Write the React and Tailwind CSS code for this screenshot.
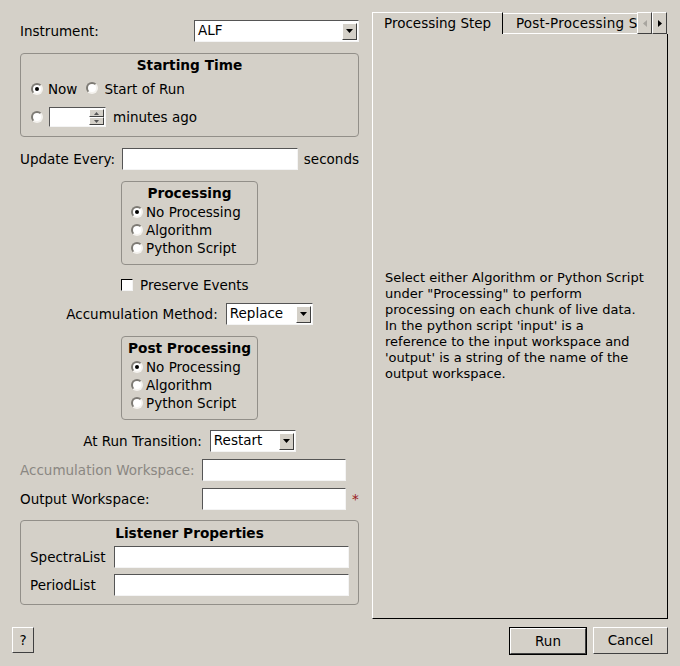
// Qt-style "Start Live Data" dialog, classic grey bevelled widgets.

const SUNKEN = 'border border-t-[#555] border-l-[#555] border-r-[#f4f4f4] border-b-[#f4f4f4]'
const RAISED = 'border border-t-white border-l-white border-r-[#404040] border-b-[#404040]'

function Radio({ checked = false }) {
  return (
    <span className="relative inline-flex h-[12px] w-[12px] shrink-0 items-center justify-center rounded-full border-2 border-t-[#7d7a74] border-l-[#7d7a74] border-r-[#f4f2ee] border-b-[#f4f2ee] bg-white">
      {checked && <span className="h-[4px] w-[4px] rounded-full bg-black" />}
    </span>
  )
}

function RadioRow({ label, checked }) {
  return (
    <div className="flex h-[18px] items-center gap-[2px]">
      <Radio checked={checked} />
      <span className="ml-[1px]">{label}</span>
    </div>
  )
}

function DownArrow({ color = '#000' }) {
  return (
    <svg width="7" height="4" viewBox="0 0 7 4">
      <path d="M0 0h7L3.5 4z" fill={color} />
    </svg>
  )
}

function Combo({ value, className = '' }) {
  return (
    <div className={`flex h-[22px] items-center bg-white ${SUNKEN} ${className}`}>
      <span className="flex-1 pl-[3px] leading-none">{value}</span>
      <span className={`mr-[1px] flex h-[17px] w-[15px] items-center justify-center bg-[#d4d0c8] ${RAISED}`}>
        <DownArrow />
      </span>
    </div>
  )
}

function Field({ className = '' }) {
  return <div className={`h-[22px] bg-white ${SUNKEN} ${className}`} />
}

function Group({ title, className = '', children }) {
  return (
    <div className={`rounded-[4px] border border-[#928f89] ${className}`}>
      <div className="h-[16px] whitespace-nowrap text-center text-[13.7px] font-bold leading-[16px]">{title}</div>
      {children}
    </div>
  )
}

function ChoiceGroup({ title, className = '' }) {
  return (
    <Group title={title} className={`mx-auto h-[84px] w-[137px] pt-[3px] ${className}`}>
      <div className="mt-[2px] pl-[9px]">
        <RadioRow label="No Processing" checked />
        <RadioRow label="Algorithm" />
        <RadioRow label="Python Script" />
      </div>
    </Group>
  )
}

function Button({ children, isDefault = false, className = '' }) {
  const inner = (
    <div className={`flex h-full w-full items-center justify-center bg-[#d4d0c8] ${RAISED}`}>{children}</div>
  )
  return isDefault ? (
    <div className={`border border-black ${className}`}>{inner}</div>
  ) : (
    <div className={className}>{inner}</div>
  )
}

function LeftColumn() {
  return (
    <div className="ml-[20px] mt-[20px] w-[339px] text-[13.5px]">
      <div className="flex h-[22px] items-center justify-between">
        <span>Instrument:</span>
        <Combo value="ALF" className="w-[165px]" />
      </div>

      <Group title="Starting Time" className="mt-[11px] h-[84px] pt-[3px]">
        <div className="mt-[6px] flex h-[20px] items-center pl-[10px]">
          <Radio checked />
          <span className="ml-[5px]">Now</span>
          <span className="ml-[9px]"><Radio /></span>
          <span className="ml-[6px]">Start of Run</span>
        </div>
        <div className="mt-[8px] flex h-[20px] items-center pl-[10px]">
          <Radio />
          <div className={`ml-[6px] flex h-[20px] w-[57px] items-center justify-end bg-white ${SUNKEN}`}>
            <div className="mr-[1px] flex flex-col">
              <span className={`flex h-[8px] w-[15px] items-center justify-center bg-[#d4d0c8] ${RAISED}`}>
                <svg width="5" height="3" viewBox="0 0 5 3"><path d="M0 3h5L2.5 0z" fill="#555" /></svg>
              </span>
              <span className={`flex h-[8px] w-[15px] items-center justify-center bg-[#d4d0c8] ${RAISED}`}>
                <svg width="5" height="3" viewBox="0 0 5 3"><path d="M0 0h5L2.5 3z" fill="#555" /></svg>
              </span>
            </div>
          </div>
          <span className="ml-[7px]">minutes ago</span>
        </div>
      </Group>

      <div className="mt-[11px] flex h-[22px] items-center">
        <span className="w-[102px]">Update Every:</span>
        <Field className="w-[176px]" />
        <span className="ml-auto">seconds</span>
      </div>

      <ChoiceGroup title="Processing" className="mt-[11px]" />

      <div className="mt-[12px] flex h-[16px] items-center pl-[101px]">
        <span className="h-[12px] w-[12px] border border-t-black border-l-black border-r-[#f4f4f4] border-b-[#f4f4f4] bg-white" />
        <span className="ml-[7px]">Preserve Events</span>
      </div>

      <div className="mt-[10px] flex h-[22px] items-center justify-center gap-[8px]">
        <span>Accumulation Method:</span>
        <Combo value="Replace" className="w-[87px]" />
      </div>

      <ChoiceGroup title="Post Processing" className="mt-[11px]" />

      <div className="mt-[10px] flex h-[22px] items-center justify-center gap-[8px]">
        <span>At Run Transition:</span>
        <Combo value="Restart" className="w-[86px]" />
      </div>

      <div className="mt-[7px] grid grid-cols-[182px_144px_1fr] items-center gap-y-[7px]">
        <span className="whitespace-nowrap text-[#8a8782]">Accumulation Workspace:</span>
        <Field />
        <span />
        <span>Output Workspace:</span>
        <Field />
        <span className="pl-[6px] text-[#9b1b1b]">*</span>
      </div>

      <Group title="Listener Properties" className="mt-[10px] h-[85px] pt-[4px]">
        <div className="mt-[5px] grid grid-cols-[84px_235px] items-center gap-y-[6px] pl-[9px]">
          <span>SpectraList</span>
          <Field />
          <span>PeriodList</span>
          <Field />
        </div>
      </Group>
    </div>
  )
}

function RightPanel() {
  return (
    <div className="ml-[13px] mt-[12px] flex h-[607px] w-[296px] flex-col">
      <div className="flex h-[22px] items-end text-[13.5px]">
        <div className="flex h-[22px] w-[131px] items-center whitespace-nowrap border-l border-t border-r border-l-white border-t-white border-r-black pl-[11px]">
          Processing Step
        </div>
        <div className="flex h-[21px] w-[134px] items-center overflow-hidden whitespace-nowrap border-t border-b border-t-white border-b-white pl-[13px] tracking-[0.2px]">
          Post-Processing Step
        </div>
        <div className="flex h-[22px]">
          <span className={`flex h-[22px] w-[15px] items-center justify-center bg-[#d4d0c8] ${RAISED}`}>
            <svg width="4" height="7" viewBox="0 0 4 7"><path d="M4 0v7L0 3.5z" fill="#a8a59f" /></svg>
          </span>
          <span className={`flex h-[22px] w-[15px] items-center justify-center bg-[#d4d0c8] ${RAISED}`}>
            <svg width="4" height="7" viewBox="0 0 4 7"><path d="M0 0v7L4 3.5z" fill="#000" /></svg>
          </span>
        </div>
      </div>
      <div className="flex flex-1 items-center border-l border-b border-r border-l-white border-b-black border-r-black px-[12px]">
        <p className="leading-[16px]">
          Select either Algorithm or Python Script
          <br />
          under "Processing" to perform
          <br />
          processing on each chunk of live data.
          <br />
          In the python script 'input' is a
          <br />
          reference to the input workspace and
          <br />
          'output' is a string of the name of the
          <br />
          output workspace.
        </p>
      </div>
    </div>
  )
}

export default function App() {
  return (
    <div className="flex h-[666px] w-[680px] flex-col bg-[#d4d0c8] font-['DejaVu_Sans',sans-serif] text-[13px] text-black">
      <div className="flex">
        <LeftColumn />
        <RightPanel />
      </div>
      <div className="mt-[8px] flex items-start pl-[12px] text-[13.5px]">
        <Button className="h-[26px] w-[22px]">?</Button>
        <Button isDefault className="ml-auto h-[28px] w-[78px]">Run</Button>
        <Button className="ml-[6px] mr-[12px] h-[27px] w-[75px]">Cancel</Button>
      </div>
    </div>
  )
}
